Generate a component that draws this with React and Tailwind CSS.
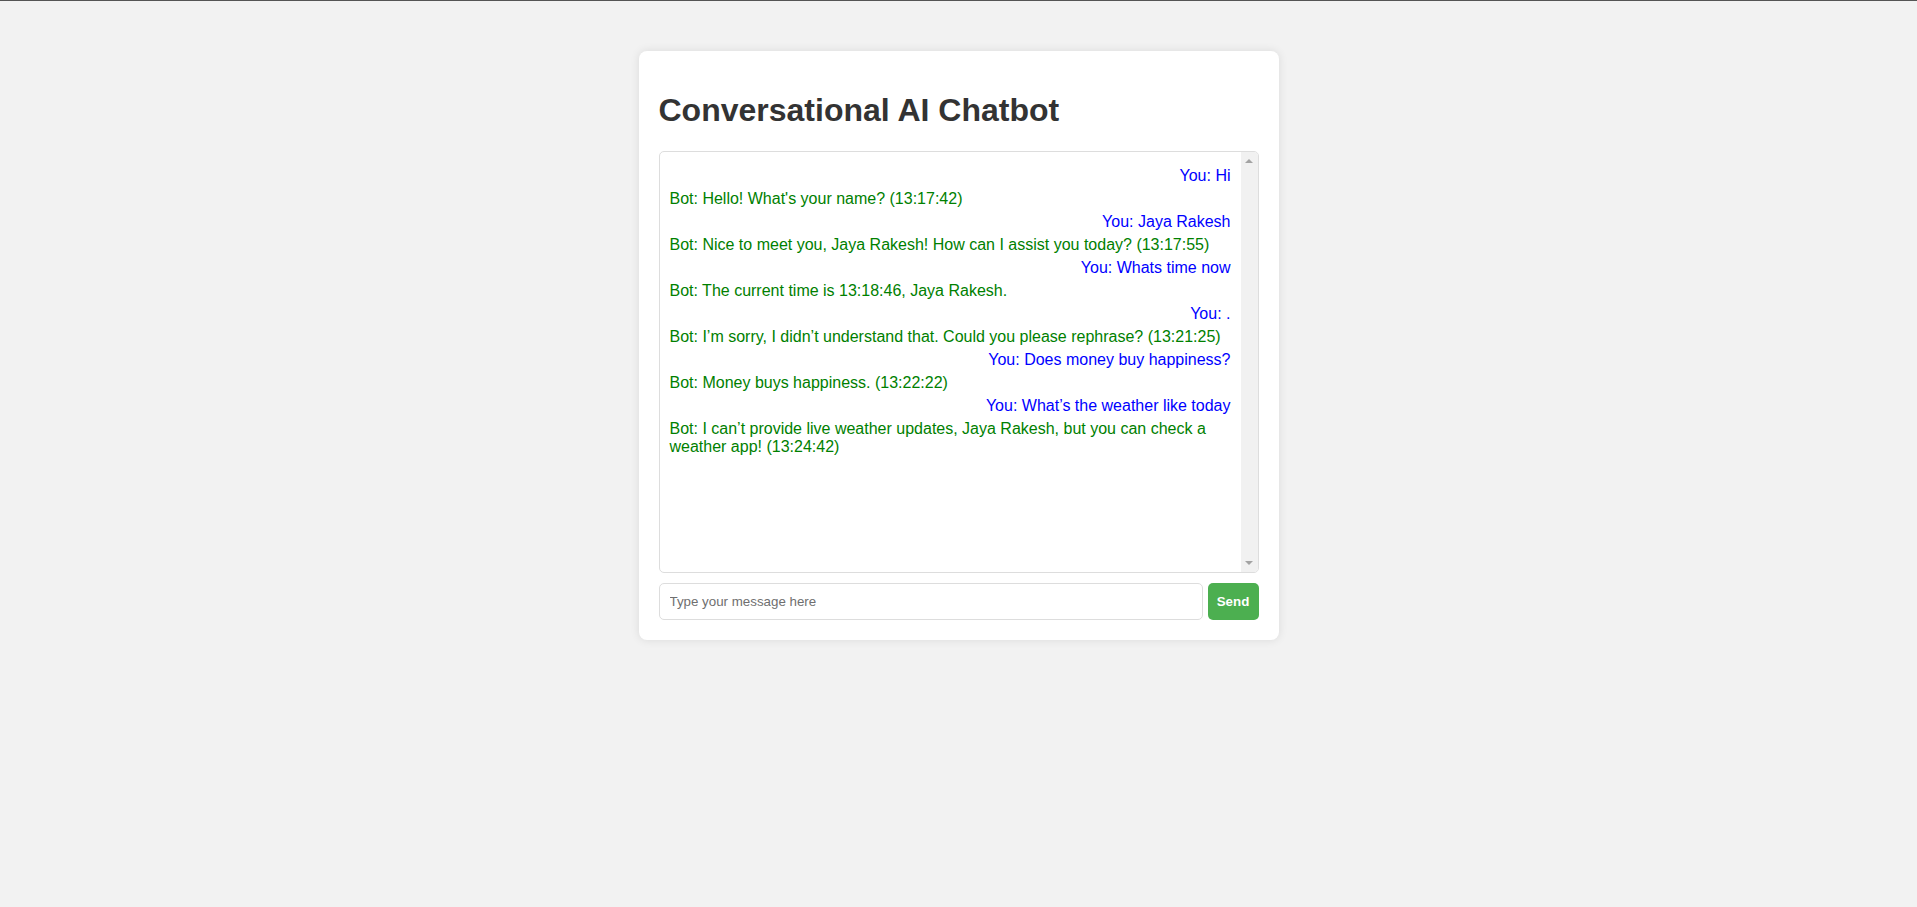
import React, { useState } from "react"

const initialMessages = [
    { from: "user", text: "You: Hi" },
    { from: "bot", text: "Bot: Hello! What's your name? (13:17:42)" },
    { from: "user", text: "You: Jaya Rakesh" },
    { from: "bot", text: "Bot: Nice to meet you, Jaya Rakesh! How can I assist you today? (13:17:55)" },
    { from: "user", text: "You: Whats time now" },
    { from: "bot", text: "Bot: The current time is 13:18:46, Jaya Rakesh." },
    { from: "user", text: "You: ." },
    { from: "bot", text: "Bot: I\u2019m sorry, I didn\u2019t understand that. Could you please rephrase? (13:21:25)" },
    { from: "user", text: "You: Does money buy happiness?" },
    { from: "bot", text: "Bot: Money buys happiness. (13:22:22)" },
    { from: "user", text: "You: What\u2019s the weather like today" },
    { from: "bot", text: "Bot: I can\u2019t provide live weather updates, Jaya Rakesh, but you can check a weather app! (13:24:42)" },
]

const App = () => {
    const [messages, setMessages] = useState(initialMessages)
    const [input, setInput] = useState("")

    const sendMessage = () => {
        if (!input.trim()) return
        setMessages([...messages, { from: "user", text: `You: ${input}` }])
        setInput("")
    }

    return (
        <div className="min-h-screen bg-[#f2f2f2] border-t border-[#555] pt-[50px] font-['Liberation_Sans',Arial,sans-serif]">
            <div className="mx-auto w-[640px] bg-white p-5 rounded-lg shadow-[0_0_10px_rgba(0,0,0,0.1)]">
                <h1 className="my-[21.44px] text-[32px] leading-[37px] font-bold text-[#333]">Conversational AI Chatbot</h1>

                {/* chat log with a classic scrollbar look */}
                <div className="flex flex-row h-[422px] border border-[#ddd] rounded-[5px] overflow-hidden">
                    <div className="flex-1 p-[10px] overflow-hidden">
                        {messages.map((msg, i) => (
                            <div
                                key={i}
                                className={msg.from === "user"
                                    ? "my-[5px] text-right text-[#0000ff] text-base leading-[18px]"
                                    : "my-[5px] text-left text-[#008000] text-base leading-[18px]"}
                            >
                                {msg.text}
                            </div>
                        ))}
                    </div>
                    <div className="w-[17px] bg-[#f1f1f1] flex flex-col justify-between items-center py-[7px]">
                        <div className="w-0 h-0 border-x-[4px] border-x-transparent border-b-[4px] border-b-[#a3a3a3]" />
                        <div className="w-0 h-0 border-x-[4px] border-x-transparent border-t-[4px] border-t-[#a3a3a3]" />
                    </div>
                </div>

                <div className="flex flex-row gap-[5px] mt-[10px]">
                    <input
                        type="text"
                        value={input}
                        onChange={e => setInput(e.target.value)}
                        onKeyDown={e => e.key === "Enter" && sendMessage()}
                        placeholder="Type your message here"
                        className="flex-1 p-[10px] text-[13.33px] leading-[15px] border border-[#ddd] rounded-[5px] outline-none placeholder:text-[#6f6f6f]"
                    />
                    <button
                        onClick={sendMessage}
                        className="w-[51px] py-[10px] bg-[#4CAF50] text-white text-[13.33px] leading-[15px] font-bold rounded-[5px] cursor-pointer"
                    >
                        Send
                    </button>
                </div>
            </div>
        </div>
    )
}

export default App
